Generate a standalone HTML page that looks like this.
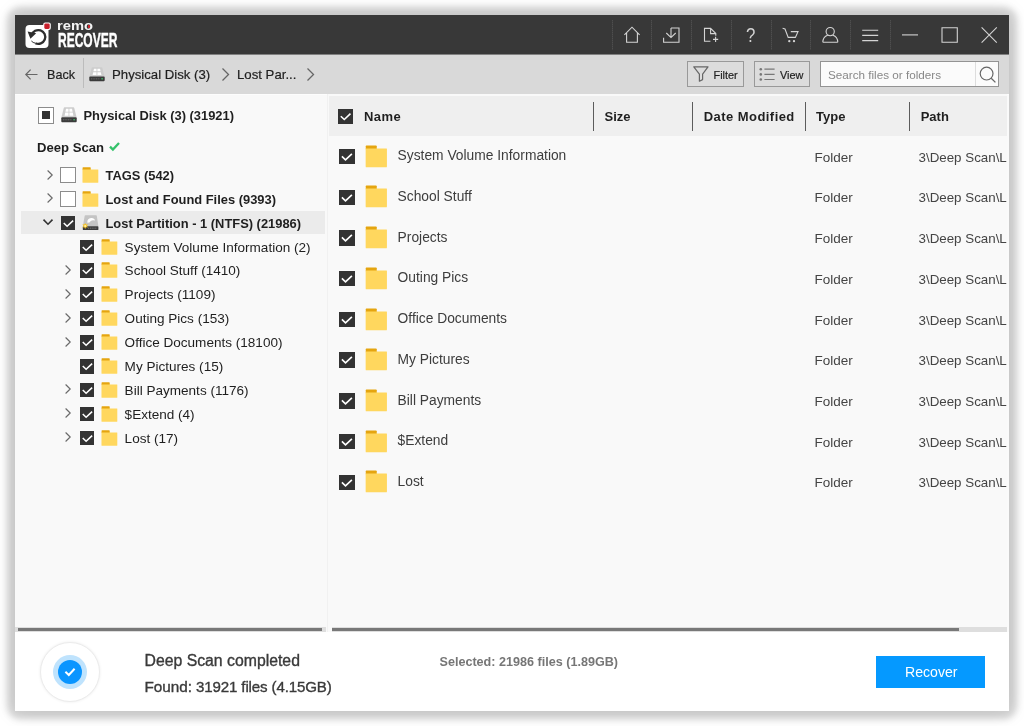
<!DOCTYPE html>
<html lang="en">
<head>
<meta charset="utf-8">
<title>Remo Recover</title>
<style>
*{box-sizing:border-box;margin:0;padding:0}
html,body{width:1024px;height:726px;overflow:hidden;background:#fff}
body{font-family:"Liberation Sans",sans-serif;color:#1f1f1f;position:relative}
#win{will-change:transform;position:absolute;left:15px;top:15px;width:994px;height:696px;background:#fafafa}
#shadow{position:absolute;left:16px;top:16px;width:992px;height:694px;border-radius:5px;box-shadow:0 0 20px 3px rgba(0,0,0,.125),0 0 6px 9px rgba(0,0,0,.15)}
#title{position:absolute;left:0;top:0;width:994px;height:39px;background:#383838}
#tool{position:absolute;left:0;top:39px;width:994px;height:40px;background:#d9d9d9}
#tree{position:absolute;left:0;top:79px;width:313px;height:538px;background:#f9f9f9}
#list{position:absolute;left:313px;top:79px;width:679.3px;height:538px;background:#f9f9f9;overflow:hidden}
#status{position:absolute;left:0;top:617px;width:994px;height:79px;background:#fff}
.t{position:absolute;white-space:pre;line-height:20px;height:20px;transform-origin:0 50%}
.b{font-weight:700}
svg{position:absolute;overflow:visible}
.sep{position:absolute;width:1px;top:5px;height:30px;background:repeating-linear-gradient(#4e4e4e 0 1px,#424242 1px 2px)}
.cb{position:absolute;width:16px;height:16px;background:#333}
.cbe{position:absolute;width:16px;height:16px;background:#fff;border:1px solid #8c8c8c}
</style>
</head>
<body>
<div id="shadow"></div>
<div id="win">
<div id="title">
<svg style="left:10px;top:8px" width="26" height="26" viewBox="0 0 26 26"><rect x="0.5" y="2" width="23" height="23" rx="4" fill="#fff"/><path d="M6.7 12.1 A6.9 6.9 0 1 1 10.4 20.2" fill="none" stroke="#2e2e2e" stroke-width="2.3"/><path d="M10.4 20.2 Q8 19.8 6.4 18" fill="none" stroke="#2e2e2e" stroke-width="1"/><path d="M2.6 8.6 L11.2 10.2 L5.4 15.8 Z" fill="#2e2e2e"/><rect x="18.2" y="-0.6" width="7.6" height="7.6" rx="2" fill="#fff"/><rect x="19.3" y="0.5" width="5.4" height="5.4" rx="1.3" fill="#c8202c"/></svg>
<div class="t b" style="left:42.3px;top:1.2px;font-size:13px;color:#f4f4f4;transform:scaleX(1.13)">remo</div>
<div style="position:absolute;left:72.6px;top:10px;width:2.8px;height:3px;background:#d0242f;border-radius:.6px"></div>
<div class="t b" style="left:42.7px;top:14.7px;font-size:20px;color:#fff;transform:scaleX(0.6);-webkit-text-stroke:.45px #fff">RECOVER</div>
<div class="sep" style="left:596.5px"></div>
<div class="sep" style="left:636.2px"></div>
<div class="sep" style="left:676px"></div>
<div class="sep" style="left:715.7px"></div>
<div class="sep" style="left:755.5px"></div>
<div class="sep" style="left:795.2px"></div>
<div class="sep" style="left:835px"></div>
<div class="sep" style="left:874.7px"></div>
<svg style="left:-15px;top:-15px" width="1024" height="60" viewBox="0 0 1024 60"><path d="M624.4 34.8 L632 27.2 L639.6 34.8 M626.6 33 V42.3 H637.4 V33" fill="none" stroke="#d4d4d4" stroke-width="1.1"/></svg>
<svg style="left:-15px;top:-15px" width="1024" height="60" viewBox="0 0 1024 60"><path d="M671 28 H679 V42.2 H663.6 V37.8 M671 28 V37.4 M666.3 33 L671 37.6 L675.7 33" fill="none" stroke="#d4d4d4" stroke-width="1.1"/></svg>
<svg style="left:-15px;top:-15px" width="1024" height="60" viewBox="0 0 1024 60"><path d="M710.4 41.3 H704.5 V28.4 H710.6 L715.8 33.6 V35.8 M710.6 28.4 V33.6 H715.8 M715.6 36.8 V42 M713 39.4 H718.2" fill="none" stroke="#d4d4d4" stroke-width="1.1"/></svg>
<div class="t" style="left:731px;top:10.4px;font-size:20.5px;color:#d2d2d2;transform:scaleX(.82)">?</div>
<svg style="left:-15px;top:-15px" width="1024" height="60" viewBox="0 0 1024 60"><path d="M782.6 28.3 L785 29 L788.2 37.4 H795.4 L798 31.6 H790.8" fill="none" stroke="#d4d4d4" stroke-width="1.1"/><circle cx="789.3" cy="41.2" r="1.15" fill="#d4d4d4"/><circle cx="794" cy="41.2" r="1.15" fill="#d4d4d4"/></svg>
<svg style="left:-15px;top:-15px" width="1024" height="60" viewBox="0 0 1024 60"><path d="M834.3 31.6 A4.1 4.1 0 1 1 826.1 31.6 A4.1 4.1 0 1 1 834.3 31.6 Z M822.8 42.3 Q823 36.6 827.6 35.2 M837.8 42.3 Q837.6 36.6 833 35.2 M822.8 42.3 H837.8" fill="none" stroke="#d4d4d4" stroke-width="1.1"/></svg>
<svg style="left:-15px;top:-15px" width="1024" height="60" viewBox="0 0 1024 60"><path d="M862.2 30.3 H878.2 M862.2 35.4 H878.2 M862.2 40.6 H878.2" fill="none" stroke="#d4d4d4" stroke-width="1.1"/></svg>
<svg style="left:-15px;top:-15px" width="1024" height="60" viewBox="0 0 1024 60"><path d="M902 34.9 H918" fill="none" stroke="#d4d4d4" stroke-width="1.1"/></svg>
<svg style="left:-15px;top:-15px" width="1024" height="60" viewBox="0 0 1024 60"><path d="M942 27.7 H957.3 V42.2 H942 Z" fill="none" stroke="#d4d4d4" stroke-width="1.1"/></svg>
<svg style="left:-15px;top:-15px" width="1024" height="60" viewBox="0 0 1024 60"><path d="M981.6 27.4 L996.8 42.6 M996.8 27.4 L981.6 42.6" fill="none" stroke="#d4d4d4" stroke-width="1.1"/></svg>
</div>
<div id="tool">
<svg style="left:10px;top:15px" width="13" height="11" viewBox="0 0 13 11"><path d="M12.5 5.5 H1 M5.6 0.6 L0.8 5.5 L5.6 10.4" fill="none" stroke="#666" stroke-width="1.2"/></svg>
<div class="t " style="left:32px;top:11px;font-size:12.6px;-webkit-text-stroke:.2px #1f1f1f;">Back</div>
<div style="position:absolute;left:67.6px;top:4px;width:1px;height:30px;background:#bcbcbc"></div>
<svg style="left:74.3px;top:13.1px" width="16" height="14.5" viewBox="0 0 17 16" preserveAspectRatio="none"><path d="M3.8 0.2 H13.2 Q13.9 0.2 14.1 0.9 L16.6 10.8 H0.4 L2.9 0.9 Q3.1 0.2 3.8 0.2 Z" fill="#cdcdcd"/><path d="M5.3 1.8h2.7v3H4.7z M8.9 1.8h2.8l.6 3H8.9z M4.5 5.7h3.5v3.2H3.8z M8.9 5.7h3.6l.7 3.2H8.9z" fill="#fff"/><rect x="0.3" y="10.6" width="16.4" height="5" rx="0.9" fill="#3b3b3b"/><path d="M2 13.1 H11.5" stroke="#6f6f6f" stroke-width="1" stroke-dasharray="1.2 .6"/><circle cx="13.9" cy="13.1" r="0.85" fill="#3ecf6e"/></svg>
<div class="t " style="left:97px;top:11px;font-size:13.2px;-webkit-text-stroke:.2px #1f1f1f;">Physical Disk (3)</div>
<svg style="left:207.0px;top:14.0px" width="7" height="13" viewBox="0 0 7 13"><path d="M0.5 0.5 L6.5 6.5 L0.5 12.5" fill="none" stroke="#666" stroke-width="1.3"/></svg>
<div class="t " style="left:222px;top:11px;font-size:13.2px;-webkit-text-stroke:.2px #1f1f1f;">Lost Par...</div>
<svg style="left:292.0px;top:14.0px" width="7" height="13" viewBox="0 0 7 13"><path d="M0.5 0.5 L6.5 6.5 L0.5 12.5" fill="none" stroke="#666" stroke-width="1.3"/></svg>
<div style="position:absolute;left:672px;top:7px;width:57px;height:26px;border:1px solid #999;background:#dcdcdc"></div>
<svg style="left:678px;top:12px" width="16" height="16" viewBox="0 0 16 16"><path d="M0.8 0.8 H15 L9.6 8.2 V13.6 L6.4 15.2 V8.2 Z" fill="none" stroke="#666" stroke-width="1.2" stroke-linejoin="round"/></svg>
<div class="t " style="left:698.5px;top:10.5px;font-size:10.9px;-webkit-text-stroke:.2px #1f1f1f;">Filter</div>
<div style="position:absolute;left:739px;top:7px;width:56px;height:26px;border:1px solid #999;background:#dcdcdc"></div>
<svg style="left:744px;top:14px" width="17" height="13" viewBox="0 0 17 13"><path d="M5.4 1.2 H15.6 M5.4 6.4 H15.6 M5.4 11.5 H15.6" fill="none" stroke="#777" stroke-width="1.2"/><circle cx="1.8" cy="1.2" r="1.3" fill="#777"/><circle cx="1.8" cy="6.4" r="1.3" fill="#777"/><circle cx="1.8" cy="11.5" r="1.3" fill="#777"/></svg>
<div class="t " style="left:765px;top:10.5px;font-size:10.9px;-webkit-text-stroke:.2px #1f1f1f;">View</div>
<div style="position:absolute;left:805px;top:7px;width:179px;height:26px;border:1px solid #939393;background:#fbfbfb"></div>
<div style="position:absolute;left:960px;top:8px;width:1px;height:24px;background:#ddd"></div>
<div class="t " style="left:813px;top:10.5px;font-size:11.7px;color:#888;">Search files or folders</div>
<svg style="left:964px;top:12px" width="17" height="17" viewBox="0 0 17 17"><circle cx="7.6" cy="7.6" r="6.4" fill="none" stroke="#666" stroke-width="1.2"/><path d="M12.2 12.2 L16.4 16.4" stroke="#666" stroke-width="1.3"/></svg>
</div>
<div style="position:absolute;left:0;top:39px;width:994px;height:1px;background:#808080"></div>
<div id="tree">
<div style="position:absolute;left:0;top:0;width:994px;height:1.2px;background:#fdfdfd"></div>
<div style="position:absolute;left:23px;top:13px;width:16px;height:16.5px;border:1px solid #8c8c8c;background:#fff"><div style="position:absolute;left:3px;top:3px;width:8px;height:8px;background:#333"></div></div>
<svg style="left:45.6px;top:13.2px" width="16" height="15.6" viewBox="0 0 17 16" preserveAspectRatio="none"><path d="M3.8 0.2 H13.2 Q13.9 0.2 14.1 0.9 L16.6 10.8 H0.4 L2.9 0.9 Q3.1 0.2 3.8 0.2 Z" fill="#cdcdcd"/><path d="M5.3 1.8h2.7v3H4.7z M8.9 1.8h2.8l.6 3H8.9z M4.5 5.7h3.5v3.2H3.8z M8.9 5.7h3.6l.7 3.2H8.9z" fill="#fff"/><rect x="0.3" y="10.6" width="16.4" height="5" rx="0.9" fill="#3b3b3b"/><path d="M2 13.1 H11.5" stroke="#6f6f6f" stroke-width="1" stroke-dasharray="1.2 .6"/><circle cx="13.9" cy="13.1" r="0.85" fill="#3ecf6e"/></svg>
<div class="t b" style="left:68.5px;top:12px;font-size:12.9px;">Physical Disk (3) (31921)</div>
<div class="t b" style="left:22px;top:43.7px;font-size:13.1px;">Deep Scan</div>
<svg style="left:94px;top:48px" width="11" height="9" viewBox="0 0 11 9"><path d="M1 4.6 L3.9 7.6 L10 1" fill="none" stroke="#35c26b" stroke-width="2.3"/></svg>
<div style="position:absolute;left:6px;top:116.8px;width:304px;height:23px;background:#ebebeb"></div>
<svg style="left:31.5px;top:75.5px" width="6" height="10" viewBox="0 0 6 10"><path d="M0.6 0.5 L5.2 5 L0.6 9.5" fill="none" stroke="#6a6a6a" stroke-width="1.15"/></svg>
<div class="cbe" style="left:44.5px;top:73.0px"></div>
<svg style="left:67.0px;top:73.0px" width="16.5" height="16" viewBox="0 0 17 16" preserveAspectRatio="none"><path d="M1 0.3 H8.4 Q9 0.3 9 0.9 V3 H0.6 V0.9 Q0.6 0.3 1 0.3 Z" fill="#e5a50f"/><path d="M0.5 2.5 H16.2 Q16.8 2.2 16.8 2.8 V15.2 Q16.8 15.8 16.2 15.8 H1.1 Q0.5 15.8 0.5 15.2 Z" fill="#ffd75e"/></svg>
<div class="t b" style="left:90.5px;top:72.0px;font-size:12.9px;">TAGS (542)</div>
<svg style="left:31.5px;top:99.37px" width="6" height="10" viewBox="0 0 6 10"><path d="M0.6 0.5 L5.2 5 L0.6 9.5" fill="none" stroke="#6a6a6a" stroke-width="1.15"/></svg>
<div class="cbe" style="left:44.5px;top:96.87px"></div>
<svg style="left:67.0px;top:96.87px" width="16.5" height="16" viewBox="0 0 17 16" preserveAspectRatio="none"><path d="M1 0.3 H8.4 Q9 0.3 9 0.9 V3 H0.6 V0.9 Q0.6 0.3 1 0.3 Z" fill="#e5a50f"/><path d="M0.5 2.5 H16.2 Q16.8 2.2 16.8 2.8 V15.2 Q16.8 15.8 16.2 15.8 H1.1 Q0.5 15.8 0.5 15.2 Z" fill="#ffd75e"/></svg>
<div class="t b" style="left:90.5px;top:95.87px;font-size:12.9px;">Lost and Found Files (9393)</div>
<svg style="left:28.0px;top:125.24000000000001px" width="10" height="6" viewBox="0 0 10 6"><path d="M0.5 0.6 L5 5.2 L9.5 0.6" fill="none" stroke="#333" stroke-width="1.6"/></svg>
<div class="cb" style="left:45.9px;top:121.74000000000001px;width:14.6px;height:14.6px"><svg width="14.6" height="14.6" viewBox="0 0 16 16"><path d="M3 7.7 L6.7 11.2 L13.3 5" fill="none" stroke="#fff" stroke-width="1.7"/></svg></div>
<svg style="left:66.7px;top:120.64000000000001px" width="17" height="16" viewBox="0 0 17 16" preserveAspectRatio="none"><path d="M3.4 0.2 H14.1 Q14.7 0.2 14.8 0.8 L16.4 11.4 H0.8 L2.7 0.8 Q2.8 0.2 3.4 0.2 Z" fill="#c4c4c4"/><path d="M5.4 7.8 Q4.8 3.4 9.2 3 Q12.6 2.9 13 5.6 Q10.6 4.7 8.8 5.9 Q7.8 7.8 5.4 7.8 Z" fill="#fff"/><rect x="0.8" y="11.2" width="15.6" height="3.9" rx="0.7" fill="#3b3b3b"/><path d="M6 13.2 H15" stroke="#777" stroke-width="1" stroke-dasharray="1.2 .6"/><path d="M3.2 7.9 L4.1 9.6 L6 9.3 L4.9 10.9 L6 12.5 L4.1 12.2 L3.2 13.9 L2.3 12.2 L0.4 12.5 L1.5 10.9 L0.4 9.3 L2.3 9.6 Z" fill="#f7c325"/><circle cx="3.2" cy="10.9" r="1" fill="#fff3b0"/></svg>
<div class="t b" style="left:90.5px;top:119.74000000000001px;font-size:12.9px;">Lost Partition - 1 (NTFS) (21986)</div>
<div class="cb" style="left:64.5px;top:145.61px;width:14.6px;height:14.6px"><svg width="14.6" height="14.6" viewBox="0 0 16 16"><path d="M3 7.7 L6.7 11.2 L13.3 5" fill="none" stroke="#fff" stroke-width="1.7"/></svg></div>
<svg style="left:85.6px;top:144.61px" width="16.5" height="16" viewBox="0 0 17 16" preserveAspectRatio="none"><path d="M1 0.3 H8.4 Q9 0.3 9 0.9 V3 H0.6 V0.9 Q0.6 0.3 1 0.3 Z" fill="#e5a50f"/><path d="M0.5 2.5 H16.2 Q16.8 2.2 16.8 2.8 V15.2 Q16.8 15.8 16.2 15.8 H1.1 Q0.5 15.8 0.5 15.2 Z" fill="#ffd75e"/></svg>
<div class="t " style="left:109.6px;top:143.61px;font-size:13.55px;">System Volume Information (2)</div>
<svg style="left:50.1px;top:170.98000000000002px" width="6" height="10" viewBox="0 0 6 10"><path d="M0.6 0.5 L5.2 5 L0.6 9.5" fill="none" stroke="#6a6a6a" stroke-width="1.15"/></svg>
<div class="cb" style="left:64.5px;top:169.48000000000002px;width:14.6px;height:14.6px"><svg width="14.6" height="14.6" viewBox="0 0 16 16"><path d="M3 7.7 L6.7 11.2 L13.3 5" fill="none" stroke="#fff" stroke-width="1.7"/></svg></div>
<svg style="left:85.6px;top:168.48000000000002px" width="16.5" height="16" viewBox="0 0 17 16" preserveAspectRatio="none"><path d="M1 0.3 H8.4 Q9 0.3 9 0.9 V3 H0.6 V0.9 Q0.6 0.3 1 0.3 Z" fill="#e5a50f"/><path d="M0.5 2.5 H16.2 Q16.8 2.2 16.8 2.8 V15.2 Q16.8 15.8 16.2 15.8 H1.1 Q0.5 15.8 0.5 15.2 Z" fill="#ffd75e"/></svg>
<div class="t " style="left:109.6px;top:167.48000000000002px;font-size:13.55px;">School Stuff (1410)</div>
<svg style="left:50.1px;top:194.85000000000002px" width="6" height="10" viewBox="0 0 6 10"><path d="M0.6 0.5 L5.2 5 L0.6 9.5" fill="none" stroke="#6a6a6a" stroke-width="1.15"/></svg>
<div class="cb" style="left:64.5px;top:193.35000000000002px;width:14.6px;height:14.6px"><svg width="14.6" height="14.6" viewBox="0 0 16 16"><path d="M3 7.7 L6.7 11.2 L13.3 5" fill="none" stroke="#fff" stroke-width="1.7"/></svg></div>
<svg style="left:85.6px;top:192.35000000000002px" width="16.5" height="16" viewBox="0 0 17 16" preserveAspectRatio="none"><path d="M1 0.3 H8.4 Q9 0.3 9 0.9 V3 H0.6 V0.9 Q0.6 0.3 1 0.3 Z" fill="#e5a50f"/><path d="M0.5 2.5 H16.2 Q16.8 2.2 16.8 2.8 V15.2 Q16.8 15.8 16.2 15.8 H1.1 Q0.5 15.8 0.5 15.2 Z" fill="#ffd75e"/></svg>
<div class="t " style="left:109.6px;top:191.35000000000002px;font-size:13.55px;">Projects (1109)</div>
<svg style="left:50.1px;top:218.72px" width="6" height="10" viewBox="0 0 6 10"><path d="M0.6 0.5 L5.2 5 L0.6 9.5" fill="none" stroke="#6a6a6a" stroke-width="1.15"/></svg>
<div class="cb" style="left:64.5px;top:217.22px;width:14.6px;height:14.6px"><svg width="14.6" height="14.6" viewBox="0 0 16 16"><path d="M3 7.7 L6.7 11.2 L13.3 5" fill="none" stroke="#fff" stroke-width="1.7"/></svg></div>
<svg style="left:85.6px;top:216.22px" width="16.5" height="16" viewBox="0 0 17 16" preserveAspectRatio="none"><path d="M1 0.3 H8.4 Q9 0.3 9 0.9 V3 H0.6 V0.9 Q0.6 0.3 1 0.3 Z" fill="#e5a50f"/><path d="M0.5 2.5 H16.2 Q16.8 2.2 16.8 2.8 V15.2 Q16.8 15.8 16.2 15.8 H1.1 Q0.5 15.8 0.5 15.2 Z" fill="#ffd75e"/></svg>
<div class="t " style="left:109.6px;top:215.22px;font-size:13.55px;">Outing Pics (153)</div>
<svg style="left:50.1px;top:242.59px" width="6" height="10" viewBox="0 0 6 10"><path d="M0.6 0.5 L5.2 5 L0.6 9.5" fill="none" stroke="#6a6a6a" stroke-width="1.15"/></svg>
<div class="cb" style="left:64.5px;top:241.09px;width:14.6px;height:14.6px"><svg width="14.6" height="14.6" viewBox="0 0 16 16"><path d="M3 7.7 L6.7 11.2 L13.3 5" fill="none" stroke="#fff" stroke-width="1.7"/></svg></div>
<svg style="left:85.6px;top:240.09px" width="16.5" height="16" viewBox="0 0 17 16" preserveAspectRatio="none"><path d="M1 0.3 H8.4 Q9 0.3 9 0.9 V3 H0.6 V0.9 Q0.6 0.3 1 0.3 Z" fill="#e5a50f"/><path d="M0.5 2.5 H16.2 Q16.8 2.2 16.8 2.8 V15.2 Q16.8 15.8 16.2 15.8 H1.1 Q0.5 15.8 0.5 15.2 Z" fill="#ffd75e"/></svg>
<div class="t " style="left:109.6px;top:239.09px;font-size:13.55px;">Office Documents (18100)</div>
<div class="cb" style="left:64.5px;top:264.96000000000004px;width:14.6px;height:14.6px"><svg width="14.6" height="14.6" viewBox="0 0 16 16"><path d="M3 7.7 L6.7 11.2 L13.3 5" fill="none" stroke="#fff" stroke-width="1.7"/></svg></div>
<svg style="left:85.6px;top:263.96000000000004px" width="16.5" height="16" viewBox="0 0 17 16" preserveAspectRatio="none"><path d="M1 0.3 H8.4 Q9 0.3 9 0.9 V3 H0.6 V0.9 Q0.6 0.3 1 0.3 Z" fill="#e5a50f"/><path d="M0.5 2.5 H16.2 Q16.8 2.2 16.8 2.8 V15.2 Q16.8 15.8 16.2 15.8 H1.1 Q0.5 15.8 0.5 15.2 Z" fill="#ffd75e"/></svg>
<div class="t " style="left:109.6px;top:262.96000000000004px;font-size:13.55px;">My Pictures (15)</div>
<svg style="left:50.1px;top:290.33000000000004px" width="6" height="10" viewBox="0 0 6 10"><path d="M0.6 0.5 L5.2 5 L0.6 9.5" fill="none" stroke="#6a6a6a" stroke-width="1.15"/></svg>
<div class="cb" style="left:64.5px;top:288.83000000000004px;width:14.6px;height:14.6px"><svg width="14.6" height="14.6" viewBox="0 0 16 16"><path d="M3 7.7 L6.7 11.2 L13.3 5" fill="none" stroke="#fff" stroke-width="1.7"/></svg></div>
<svg style="left:85.6px;top:287.83000000000004px" width="16.5" height="16" viewBox="0 0 17 16" preserveAspectRatio="none"><path d="M1 0.3 H8.4 Q9 0.3 9 0.9 V3 H0.6 V0.9 Q0.6 0.3 1 0.3 Z" fill="#e5a50f"/><path d="M0.5 2.5 H16.2 Q16.8 2.2 16.8 2.8 V15.2 Q16.8 15.8 16.2 15.8 H1.1 Q0.5 15.8 0.5 15.2 Z" fill="#ffd75e"/></svg>
<div class="t " style="left:109.6px;top:286.83000000000004px;font-size:13.55px;">Bill Payments (1176)</div>
<svg style="left:50.1px;top:314.20000000000005px" width="6" height="10" viewBox="0 0 6 10"><path d="M0.6 0.5 L5.2 5 L0.6 9.5" fill="none" stroke="#6a6a6a" stroke-width="1.15"/></svg>
<div class="cb" style="left:64.5px;top:312.70000000000005px;width:14.6px;height:14.6px"><svg width="14.6" height="14.6" viewBox="0 0 16 16"><path d="M3 7.7 L6.7 11.2 L13.3 5" fill="none" stroke="#fff" stroke-width="1.7"/></svg></div>
<svg style="left:85.6px;top:311.70000000000005px" width="16.5" height="16" viewBox="0 0 17 16" preserveAspectRatio="none"><path d="M1 0.3 H8.4 Q9 0.3 9 0.9 V3 H0.6 V0.9 Q0.6 0.3 1 0.3 Z" fill="#e5a50f"/><path d="M0.5 2.5 H16.2 Q16.8 2.2 16.8 2.8 V15.2 Q16.8 15.8 16.2 15.8 H1.1 Q0.5 15.8 0.5 15.2 Z" fill="#ffd75e"/></svg>
<div class="t " style="left:109.6px;top:310.70000000000005px;font-size:13.55px;">$Extend (4)</div>
<svg style="left:50.1px;top:338.07px" width="6" height="10" viewBox="0 0 6 10"><path d="M0.6 0.5 L5.2 5 L0.6 9.5" fill="none" stroke="#6a6a6a" stroke-width="1.15"/></svg>
<div class="cb" style="left:64.5px;top:336.57px;width:14.6px;height:14.6px"><svg width="14.6" height="14.6" viewBox="0 0 16 16"><path d="M3 7.7 L6.7 11.2 L13.3 5" fill="none" stroke="#fff" stroke-width="1.7"/></svg></div>
<svg style="left:85.6px;top:335.57px" width="16.5" height="16" viewBox="0 0 17 16" preserveAspectRatio="none"><path d="M1 0.3 H8.4 Q9 0.3 9 0.9 V3 H0.6 V0.9 Q0.6 0.3 1 0.3 Z" fill="#e5a50f"/><path d="M0.5 2.5 H16.2 Q16.8 2.2 16.8 2.8 V15.2 Q16.8 15.8 16.2 15.8 H1.1 Q0.5 15.8 0.5 15.2 Z" fill="#ffd75e"/></svg>
<div class="t " style="left:109.6px;top:334.57px;font-size:13.55px;">Lost (17)</div>
</div>
<div id="list">
<div style="position:absolute;left:1px;top:2px;width:680px;height:40px;background:#efefef"></div>
<div class="cb" style="left:9.8px;top:15px;width:15px;height:15px"><svg width="15" height="15" viewBox="0 0 16 16"><path d="M3 7.7 L6.7 11.2 L13.3 5" fill="none" stroke="#fff" stroke-width="1.7"/></svg></div>
<div class="t b" style="left:36px;top:12.5px;font-size:13px;letter-spacing:.4px;">Name</div>
<div style="position:absolute;left:265px;top:8px;width:1.3px;height:29px;background:#5c5c5c"></div>
<div class="t b" style="left:276.5px;top:12.5px;font-size:13px;">Size</div>
<div style="position:absolute;left:364.2px;top:8px;width:1.3px;height:29px;background:#5c5c5c"></div>
<div class="t b" style="left:375.7px;top:12.5px;font-size:13px;letter-spacing:.45px;">Date Modified</div>
<div style="position:absolute;left:476.6px;top:8px;width:1.3px;height:29px;background:#5c5c5c"></div>
<div class="t b" style="left:488.1px;top:12.5px;font-size:13px;">Type</div>
<div style="position:absolute;left:581.2px;top:8px;width:1.3px;height:29px;background:#5c5c5c"></div>
<div class="t b" style="left:592.7px;top:12.5px;font-size:13px;">Path</div>
<div class="cb" style="left:11px;top:54.8px;width:15.5px;height:15.5px"><svg width="15.5" height="15.5" viewBox="0 0 16 16"><path d="M3 7.7 L6.7 11.2 L13.3 5" fill="none" stroke="#fff" stroke-width="1.7"/></svg></div>
<svg style="left:37.4px;top:50.7px" width="22.2" height="22.6" viewBox="0 0 17 16" preserveAspectRatio="none"><path d="M1 0.3 H8.4 Q9 0.3 9 0.9 V3 H0.6 V0.9 Q0.6 0.3 1 0.3 Z" fill="#e5a50f"/><path d="M0.5 2.5 H16.2 Q16.8 2.2 16.8 2.8 V15.2 Q16.8 15.8 16.2 15.8 H1.1 Q0.5 15.8 0.5 15.2 Z" fill="#ffd75e"/></svg>
<div class="t " style="left:69.6px;top:52.3px;font-size:13.8px;color:#3d3d3d;">System Volume Information</div>
<div class="t " style="left:486.5px;top:53.7px;font-size:13.5px;color:#444;">Folder</div>
<div class="t " style="left:590.5px;top:53.7px;font-size:13.35px;color:#444;">3\Deep Scan\L</div>
<div class="cb" style="left:11px;top:95.52px;width:15.5px;height:15.5px"><svg width="15.5" height="15.5" viewBox="0 0 16 16"><path d="M3 7.7 L6.7 11.2 L13.3 5" fill="none" stroke="#fff" stroke-width="1.7"/></svg></div>
<svg style="left:37.4px;top:91.42px" width="22.2" height="22.6" viewBox="0 0 17 16" preserveAspectRatio="none"><path d="M1 0.3 H8.4 Q9 0.3 9 0.9 V3 H0.6 V0.9 Q0.6 0.3 1 0.3 Z" fill="#e5a50f"/><path d="M0.5 2.5 H16.2 Q16.8 2.2 16.8 2.8 V15.2 Q16.8 15.8 16.2 15.8 H1.1 Q0.5 15.8 0.5 15.2 Z" fill="#ffd75e"/></svg>
<div class="t " style="left:69.6px;top:93.02px;font-size:13.8px;color:#3d3d3d;">School Stuff</div>
<div class="t " style="left:486.5px;top:94.42px;font-size:13.5px;color:#444;">Folder</div>
<div class="t " style="left:590.5px;top:94.42px;font-size:13.35px;color:#444;">3\Deep Scan\L</div>
<div class="cb" style="left:11px;top:136.24px;width:15.5px;height:15.5px"><svg width="15.5" height="15.5" viewBox="0 0 16 16"><path d="M3 7.7 L6.7 11.2 L13.3 5" fill="none" stroke="#fff" stroke-width="1.7"/></svg></div>
<svg style="left:37.4px;top:132.14px" width="22.2" height="22.6" viewBox="0 0 17 16" preserveAspectRatio="none"><path d="M1 0.3 H8.4 Q9 0.3 9 0.9 V3 H0.6 V0.9 Q0.6 0.3 1 0.3 Z" fill="#e5a50f"/><path d="M0.5 2.5 H16.2 Q16.8 2.2 16.8 2.8 V15.2 Q16.8 15.8 16.2 15.8 H1.1 Q0.5 15.8 0.5 15.2 Z" fill="#ffd75e"/></svg>
<div class="t " style="left:69.6px;top:133.74px;font-size:13.8px;color:#3d3d3d;">Projects</div>
<div class="t " style="left:486.5px;top:135.14px;font-size:13.5px;color:#444;">Folder</div>
<div class="t " style="left:590.5px;top:135.14px;font-size:13.35px;color:#444;">3\Deep Scan\L</div>
<div class="cb" style="left:11px;top:176.96px;width:15.5px;height:15.5px"><svg width="15.5" height="15.5" viewBox="0 0 16 16"><path d="M3 7.7 L6.7 11.2 L13.3 5" fill="none" stroke="#fff" stroke-width="1.7"/></svg></div>
<svg style="left:37.4px;top:172.85999999999999px" width="22.2" height="22.6" viewBox="0 0 17 16" preserveAspectRatio="none"><path d="M1 0.3 H8.4 Q9 0.3 9 0.9 V3 H0.6 V0.9 Q0.6 0.3 1 0.3 Z" fill="#e5a50f"/><path d="M0.5 2.5 H16.2 Q16.8 2.2 16.8 2.8 V15.2 Q16.8 15.8 16.2 15.8 H1.1 Q0.5 15.8 0.5 15.2 Z" fill="#ffd75e"/></svg>
<div class="t " style="left:69.6px;top:174.46px;font-size:13.8px;color:#3d3d3d;">Outing Pics</div>
<div class="t " style="left:486.5px;top:175.85999999999999px;font-size:13.5px;color:#444;">Folder</div>
<div class="t " style="left:590.5px;top:175.85999999999999px;font-size:13.35px;color:#444;">3\Deep Scan\L</div>
<div class="cb" style="left:11px;top:217.68px;width:15.5px;height:15.5px"><svg width="15.5" height="15.5" viewBox="0 0 16 16"><path d="M3 7.7 L6.7 11.2 L13.3 5" fill="none" stroke="#fff" stroke-width="1.7"/></svg></div>
<svg style="left:37.4px;top:213.57999999999998px" width="22.2" height="22.6" viewBox="0 0 17 16" preserveAspectRatio="none"><path d="M1 0.3 H8.4 Q9 0.3 9 0.9 V3 H0.6 V0.9 Q0.6 0.3 1 0.3 Z" fill="#e5a50f"/><path d="M0.5 2.5 H16.2 Q16.8 2.2 16.8 2.8 V15.2 Q16.8 15.8 16.2 15.8 H1.1 Q0.5 15.8 0.5 15.2 Z" fill="#ffd75e"/></svg>
<div class="t " style="left:69.6px;top:215.18px;font-size:13.8px;color:#3d3d3d;">Office Documents</div>
<div class="t " style="left:486.5px;top:216.57999999999998px;font-size:13.5px;color:#444;">Folder</div>
<div class="t " style="left:590.5px;top:216.57999999999998px;font-size:13.35px;color:#444;">3\Deep Scan\L</div>
<div class="cb" style="left:11px;top:258.40000000000003px;width:15.5px;height:15.5px"><svg width="15.5" height="15.5" viewBox="0 0 16 16"><path d="M3 7.7 L6.7 11.2 L13.3 5" fill="none" stroke="#fff" stroke-width="1.7"/></svg></div>
<svg style="left:37.4px;top:254.3px" width="22.2" height="22.6" viewBox="0 0 17 16" preserveAspectRatio="none"><path d="M1 0.3 H8.4 Q9 0.3 9 0.9 V3 H0.6 V0.9 Q0.6 0.3 1 0.3 Z" fill="#e5a50f"/><path d="M0.5 2.5 H16.2 Q16.8 2.2 16.8 2.8 V15.2 Q16.8 15.8 16.2 15.8 H1.1 Q0.5 15.8 0.5 15.2 Z" fill="#ffd75e"/></svg>
<div class="t " style="left:69.6px;top:255.90000000000003px;font-size:13.8px;color:#3d3d3d;">My Pictures</div>
<div class="t " style="left:486.5px;top:257.3px;font-size:13.5px;color:#444;">Folder</div>
<div class="t " style="left:590.5px;top:257.3px;font-size:13.35px;color:#444;">3\Deep Scan\L</div>
<div class="cb" style="left:11px;top:299.12px;width:15.5px;height:15.5px"><svg width="15.5" height="15.5" viewBox="0 0 16 16"><path d="M3 7.7 L6.7 11.2 L13.3 5" fill="none" stroke="#fff" stroke-width="1.7"/></svg></div>
<svg style="left:37.4px;top:295.02px" width="22.2" height="22.6" viewBox="0 0 17 16" preserveAspectRatio="none"><path d="M1 0.3 H8.4 Q9 0.3 9 0.9 V3 H0.6 V0.9 Q0.6 0.3 1 0.3 Z" fill="#e5a50f"/><path d="M0.5 2.5 H16.2 Q16.8 2.2 16.8 2.8 V15.2 Q16.8 15.8 16.2 15.8 H1.1 Q0.5 15.8 0.5 15.2 Z" fill="#ffd75e"/></svg>
<div class="t " style="left:69.6px;top:296.62px;font-size:13.8px;color:#3d3d3d;">Bill Payments</div>
<div class="t " style="left:486.5px;top:298.02px;font-size:13.5px;color:#444;">Folder</div>
<div class="t " style="left:590.5px;top:298.02px;font-size:13.35px;color:#444;">3\Deep Scan\L</div>
<div class="cb" style="left:11px;top:339.84px;width:15.5px;height:15.5px"><svg width="15.5" height="15.5" viewBox="0 0 16 16"><path d="M3 7.7 L6.7 11.2 L13.3 5" fill="none" stroke="#fff" stroke-width="1.7"/></svg></div>
<svg style="left:37.4px;top:335.73999999999995px" width="22.2" height="22.6" viewBox="0 0 17 16" preserveAspectRatio="none"><path d="M1 0.3 H8.4 Q9 0.3 9 0.9 V3 H0.6 V0.9 Q0.6 0.3 1 0.3 Z" fill="#e5a50f"/><path d="M0.5 2.5 H16.2 Q16.8 2.2 16.8 2.8 V15.2 Q16.8 15.8 16.2 15.8 H1.1 Q0.5 15.8 0.5 15.2 Z" fill="#ffd75e"/></svg>
<div class="t " style="left:69.6px;top:337.34px;font-size:13.8px;color:#3d3d3d;">$Extend</div>
<div class="t " style="left:486.5px;top:338.73999999999995px;font-size:13.5px;color:#444;">Folder</div>
<div class="t " style="left:590.5px;top:338.73999999999995px;font-size:13.35px;color:#444;">3\Deep Scan\L</div>
<div class="cb" style="left:11px;top:380.56px;width:15.5px;height:15.5px"><svg width="15.5" height="15.5" viewBox="0 0 16 16"><path d="M3 7.7 L6.7 11.2 L13.3 5" fill="none" stroke="#fff" stroke-width="1.7"/></svg></div>
<svg style="left:37.4px;top:376.46px" width="22.2" height="22.6" viewBox="0 0 17 16" preserveAspectRatio="none"><path d="M1 0.3 H8.4 Q9 0.3 9 0.9 V3 H0.6 V0.9 Q0.6 0.3 1 0.3 Z" fill="#e5a50f"/><path d="M0.5 2.5 H16.2 Q16.8 2.2 16.8 2.8 V15.2 Q16.8 15.8 16.2 15.8 H1.1 Q0.5 15.8 0.5 15.2 Z" fill="#ffd75e"/></svg>
<div class="t " style="left:69.6px;top:378.06px;font-size:13.8px;color:#3d3d3d;">Lost</div>
<div class="t " style="left:486.5px;top:379.46px;font-size:13.5px;color:#444;">Folder</div>
<div class="t " style="left:590.5px;top:379.46px;font-size:13.35px;color:#444;">3\Deep Scan\L</div>
</div>
<div style="position:absolute;left:312.4px;top:79px;width:1px;height:538px;background:#f1f1f1"></div>
<div style="position:absolute;left:0px;top:612.3px;width:311px;height:4.4px;background:#dedede"></div>
<div style="position:absolute;left:317px;top:612.3px;width:675px;height:4.4px;background:#dedede"></div>
<div style="position:absolute;left:3px;top:612.7px;width:304px;height:3.2px;background:#787878"></div>
<div style="position:absolute;left:317px;top:612.7px;width:626.5px;height:3.2px;background:#787878"></div>
<div id="status"><div style="position:absolute;left:0;top:-1px">
<div style="position:absolute;left:24.5px;top:11px;width:60px;height:60px;border-radius:50%;background:#fff;border:1px solid #ececec;box-shadow:0 0 3px rgba(0,0,0,.08)"></div>
<div style="position:absolute;left:37.5px;top:24px;width:34px;height:34px;border-radius:50%;background:#bfe3fd"></div>
<div style="position:absolute;left:42.5px;top:29px;width:24px;height:24px;border-radius:50%;background:#0a95ff"><svg style="left:6px;top:7px" width="12" height="10" viewBox="0 0 12 10"><path d="M1.4 4.8 L4.8 8 L10.6 1.8" fill="none" stroke="#fff" stroke-width="2"/></svg></div>
<div class="t " style="left:129.5px;top:19.6px;font-size:15.8px;color:#3a3a3a;-webkit-text-stroke:.35px #3a3a3a;">Deep Scan completed</div>
<div class="t " style="left:129.5px;top:46.3px;font-size:15.3px;color:#3a3a3a;-webkit-text-stroke:.35px #3a3a3a;">Found:</div>
<div class="t " style="left:181px;top:46.3px;font-size:15.1px;color:#3a3a3a;-webkit-text-stroke:.35px #3a3a3a;letter-spacing:-.14px;">31921 files (4.15GB)</div>
<div class="t b" style="left:424.5px;top:21px;font-size:12.6px;color:#767676;">Selected: 21986 files (1.89GB)</div>
<div style="position:absolute;left:861px;top:25px;width:109px;height:31.5px;background:#0599ff"></div>
<div class="t " style="left:890px;top:30.5px;font-size:14.1px;color:#fff;">Recover</div>
</div></div>
</div>
</body>
</html>
